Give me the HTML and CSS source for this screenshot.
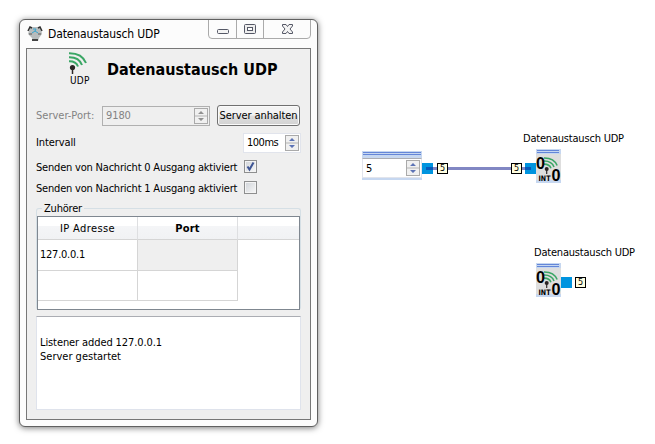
FILE: index.html
```html
<!DOCTYPE html>
<html lang="de">
<head>
<meta charset="utf-8">
<title>Datenaustausch UDP</title>
<link rel="stylesheet" href="styles.css">
</head>
<body>
<svg width="0" height="0" class="defs" aria-hidden="true">
  <symbol id="waves" viewBox="0 0 22 22">
    <path d="M0 1.200Q13 1 17 11M0 5.200Q10 5 13 13M0 9.200Q7 9 9 14.500" fill="none" stroke="#3aa665" stroke-width="2"/>
    <circle cx="3.500" cy="15.500" r="2.600" fill="#2b2525"/>
    <path d="M3.500 15V22" stroke="#2b2525" stroke-width="1.500"/>
  </symbol>
  <symbol id="spin" viewBox="0 0 14 16">
    <rect x=".5" y=".5" width="13" height="15" fill="#f0f0f0" stroke="#aaa"/>
    <path d="M1 8H13" stroke="#b4b4b4"/>
    <path d="M4 6H10L7 3ZM4 10H10L7 13Z" fill="currentColor"/>
  </symbol>
</svg>
<main class="desktop">
  <section class="window">
    <header class="titlebar">
      <svg class="app-icon" width="16" height="16" viewBox="0 0 16 16">
        <path d="M3 2L6 1H11L14 3L15 8L12 12L11 15H6L5 12L1 8Z" fill="#b8bcbd"/>
        <path d="M1 5L3 1L5 2M11 2L13 1L15 5" fill="none" stroke="#303030" stroke-width="1.500"/>
        <path d="M5 14H11" stroke="#444" stroke-width="2"/>
        <path d="M2 8H5M11 8H14" stroke="#888" stroke-width="2"/>
        <path d="M6 3H9L8 5L11 7M5 7L8 5" fill="none" stroke="#36a5cf"/>
      </svg>
      <span class="title">Datenaustausch UDP</span>
      <div class="controls">
        <svg width="103" height="20" viewBox="0 0 103 20">
          <path d="M.5 0V15Q.5 18.500 4 18.500H99Q102.500 18.500 102.500 15V0M28.500 0V18M55.500 0V18" fill="none" stroke="#aaa"/>
          <rect x="9.500" y="9.500" width="11" height="4" rx="1" fill="#f4f4f4" stroke="#555866"/>
          <rect x="36.500" y="4.500" width="11" height="9" rx="1" fill="#eee" stroke="#555866"/>
          <rect x="39.500" y="7.500" width="5" height="3" fill="#fff" stroke="#555866"/>
          <path d="M74.500 4.500H78L79.500 6.500L81 4.500H84.500V6L82 9L84.500 12V13.500H81L79.500 11.500L78 13.500H74.500V12L77 9L74.500 6Z" fill="#f4f4f4" stroke="#555866"/>
        </svg>
      </div>
    </header>
    <div class="panel">
      <div class="heading">
        <div class="brand"><svg width="22" height="22"><use href="#waves"/></svg><span>UDP</span></div>
        <h1>Datenaustausch UDP</h1>
      </div>
      <div class="row port-row">
        <span class="t-port">Server-Port:</span>
        <div class="field port"><span>9180</span><svg class="spin off" width="14" height="16"><use href="#spin"/></svg></div>
        <button><span>Server anhalten</span></button>
      </div>
      <div class="row interval-row">
        <span class="t-int">Intervall</span>
        <div class="field interval"><span>100ms</span><svg class="spin" width="14" height="16"><use href="#spin"/></svg></div>
      </div>
      <div class="row check-row">
        <span class="t-send">Senden von Nachricht 0 Ausgang aktiviert</span>
        <span class="check"><svg width="11" height="11" viewBox="0 0 11 11"><path d="M2.500 5.500L4.500 8.500L8.500 1.500" fill="none" stroke="#3e5594" stroke-width="2"/></svg></span>
      </div>
      <div class="row check-row">
        <span class="t-send">Senden von Nachricht 1 Ausgang aktiviert</span>
        <span class="check"></span>
      </div>
      <fieldset>
        <legend><span>Zuhörer</span></legend>
        <div class="table">
          <div class="th"><span class="t-ip">IP Adresse</span></div><div class="th"><b class="t-th">Port</b></div><div class="th"></div>
          <div class="td"><span class="t-addr">127.0.0.1</span></div><div class="td gray"></div><div></div>
          <div class="td"></div><div class="td"></div><div></div>
        </div>
      </fieldset>
      <div class="log"><div class="t-log1">Listener added 127.0.0.1</div><div class="t-log2">Server gestartet</div></div>
    </div>
  </section>
  <section class="canvas">
    <div class="wire"></div>
    <div class="node number"><div class="grip"></div><div class="value"><span>5</span><svg class="spin" width="14" height="16"><use href="#spin"/></svg></div></div>
    <i class="pin out"></i><b class="tag tag-a">5</b><b class="tag tag-b">5</b><i class="pin in"></i>
    <span class="label first">Datenaustausch UDP</span>
    <div class="node block upper"><svg width="25" height="34" viewBox="0 0 25 34"><g id="int-art">
      <rect width="25" height="34" fill="#c6d7f0"/><rect y="5" width="25" height="26" fill="#dedede"/>
      <path d="M1 1.500H23M1 3.500H23" stroke="#6486d8"/>
      <svg x="8" y="8" width="17" height="17"><use href="#waves"/></svg>
      <text x="0" y="19.500" class="digit" textLength="9" lengthAdjust="spacingAndGlyphs">0</text><text x="15.500" y="31.500" class="digit" textLength="9" lengthAdjust="spacingAndGlyphs">0</text>
      <text x="2.500" y="32" class="int" textLength="12" lengthAdjust="spacingAndGlyphs">INT</text></g></svg></div>
    <span class="label second">Datenaustausch UDP</span>
    <div class="node block lower"><svg width="25" height="34"><use href="#int-art"/></svg></div>
    <i class="pin free"></i><b class="tag tag-c">5</b>
  </section>
</main>
</body>
</html>
```

FILE: styles.css
```css
* { box-sizing: border-box; }
body { margin: 0; background: #fff; color: #000; font: 11px/14px "DejaVu Sans Condensed", "DejaVu Sans", sans-serif; font-stretch: condensed; }
.defs { position: absolute; }
.desktop { position: relative; width: 655px; height: 444px; padding: 19px; overflow: hidden; }
svg { display: block; flex: none; }
span, legend, b { white-space: nowrap; }
.window { width: 299px; height: 408px; border: 1px solid #606060; border-radius: 6px; padding: 0 6px; background: #fcfcfc; box-shadow: 0 1px 6px 0 #0008; }
.titlebar { height: 28px; display: flex; align-items: flex-start; }
.app-icon { margin: 6px 0 0 1px; }
.title { margin: 7px 0 0 5px; width: 113px; font-size: 12px; letter-spacing: -.13px; }
.controls { margin-left: 47px; }
.panel { width: 285px; height: 372px; border: 1px solid #777; background: #efefef; padding: 0 9px; }
.heading { display: flex; height: 56px; }
.brand { width: 23px; margin: 3px 0 0 33px; }
.brand span { display: block; font-size: 10px; line-height: 12px; margin: 1px 0 0 1px; letter-spacing: .2px; }
h1 { margin: 10px 0 0 15px; font-size: 16px; line-height: 22px; white-space: nowrap; letter-spacing: 0; }
.row { display: flex; align-items: center; justify-content: space-between; }
.port-row { height: 21px; margin-right: 1px; }
.t-port { color: #838383; width: 59px; padding-top: 1px; }
.field { display: flex; align-items: center; justify-content: space-between; height: 20px; border: 1px solid #b0b0b0; padding: 0 1px 0 3px; }
.port { width: 108px; color: #838383; letter-spacing: -.1px; }
.spin { color: #5c73b5; }
.off { color: #909090; }
button { width: 83px; height: 21px; padding: 0; border: 1px solid #707070; border-radius: 3px; box-shadow: inset 0 0 0 1px #fafafa; background: linear-gradient(#f3f3f3 48%, #dedede 52%, #d2d2d2); font: inherit; letter-spacing: -.1px; }
.interval-row { height: 19px; margin: 7px 0 0; }
.t-int { letter-spacing: -.1px; }
.interval { width: 58px; background: #fff; border-color: #e1e4ec; letter-spacing: -.5px; }
.interval span { padding-top: 1px; }
.check-row { height: 21px; margin-right: 44px; }
.t-send { padding-top: 2px; letter-spacing: -.2px; }
.interval-row + .check-row { margin-top: 4px; }
.check { width: 13px; height: 13px; border: 1px solid #8e8f8f; background: linear-gradient(135deg, #cfd3d8, #f8f8f8); box-shadow: inset 0 0 0 1px #f4f4f4; }
fieldset { position: relative; min-width: 0; width: 265px; height: 102px; margin: 10px 0 0; padding: 7px 1px 0 0; border: 1px solid #d5dfe5; border-bottom-color: #f8f8f8; border-radius: 3px; }
legend { position: absolute; top: -7px; left: 5px; padding: 0 2px; background: #efefef; letter-spacing: -.2px; }
.table { width: 263px; height: 94px; border: 1px solid #7f8790; background: #fff; display: grid; grid-template-columns: 100px 100px 61px; grid-template-rows: 23px 31px 30px; }
.th { display: flex; justify-content: center; align-items: center; border-right: 1px solid #dedfe1; border-bottom: 1px solid #d5d5d5; background: linear-gradient(#fff 42%, #f4f5f7 43%, #f1f2f4); }
.th:nth-child(3) { border-right: 0; }
.t-ip { padding-top: 2px; letter-spacing: .4px; }
.t-th { padding-top: 2px; letter-spacing: .2px; }
.td { display: flex; align-items: center; padding-left: 2px; border-right: 1px solid #d5d5d5; border-bottom: 1px solid #d5d5d5; }
.t-addr { letter-spacing: -.25px; }
.gray { background: #efefef; }
.log { width: 265px; height: 94px; margin-top: 6px; padding: 19px 3px; background: #fff; border: 1px solid #dfe3ec; border-top-color: #abadb3; white-space: nowrap; }
.t-log1 { letter-spacing: -.1px; }
.canvas { position: absolute; inset: 0; pointer-events: none; }
.canvas > * { position: absolute; }
.wire { left: 426px; top: 167px; width: 104px; height: 3px; background: #8187c3; }
.number { left: 362px; top: 151px; width: 60px; height: 29px; background: #c6d7f0; }
.grip { height: 3px; margin: 1px 1px 0; border-top: 1px solid #6486d8; border-bottom: 1px solid #6486d8; }
.value { display: flex; align-items: center; justify-content: space-between; margin-top: 3px; height: 20px; padding: 0 1px 0 3px; background: #fff; border: 1px solid #e1e4ec; border-top-color: #abadb3; }
.value span { padding-top: 1px; }
.pin { width: 11px; height: 11px; background: #0094df; }
.out { left: 422px; top: 163px; }
.in { left: 525px; top: 163px; }
.out::after, .in::after { content: ""; display: block; height: 3px; width: 7px; margin: 4px 0 0 4px; background: #0759ba; }
.in::after { width: 6px; margin-left: 0; }
.free { left: 561px; top: 277px; }
.tag { width: 11px; height: 11px; border: 1px solid #000; background: #fffee0; font: 9px/9px "DejaVu Sans Condensed", "DejaVu Sans", sans-serif; text-align: center; }
.tag-a { left: 437px; top: 163px; }
.tag-b { left: 511px; top: 163px; }
.tag-c { left: 575px; top: 277px; }
.label { letter-spacing: -.2px; }
.first { left: 523px; top: 132px; }
.second { left: 534px; top: 246px; }
.upper { left: 536px; top: 149px; }
.lower { left: 536px; top: 263px; }
.digit { font: bold 16px "Liberation Sans", sans-serif; }
.int { font: bold 7.5px "DejaVu Sans", sans-serif; }
```
